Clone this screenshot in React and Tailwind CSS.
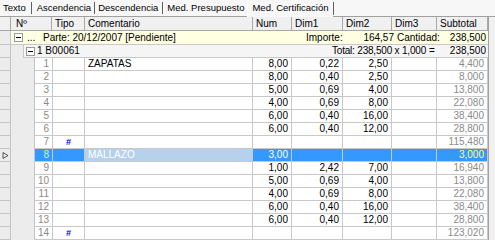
import React from "react";

const rows = [
  { n: 1, tipo: "", com: "ZAPATAS", num: "8,00", d1: "0,22", d2: "2,50", d3: "", sub: "4,400" },
  { n: 2, tipo: "", com: "", num: "8,00", d1: "0,40", d2: "2,50", d3: "", sub: "8,000" },
  { n: 3, tipo: "", com: "", num: "5,00", d1: "0,69", d2: "4,00", d3: "", sub: "13,800" },
  { n: 4, tipo: "", com: "", num: "4,00", d1: "0,69", d2: "8,00", d3: "", sub: "22,080" },
  { n: 5, tipo: "", com: "", num: "6,00", d1: "0,40", d2: "16,00", d3: "", sub: "38,400" },
  { n: 6, tipo: "", com: "", num: "6,00", d1: "0,40", d2: "12,00", d3: "", sub: "28,800" },
  { n: 7, tipo: "#", com: "", num: "", d1: "", d2: "", d3: "", sub: "115,480" },
  { n: 8, tipo: "", com: "MALLAZO", num: "3,00", d1: "", d2: "", d3: "", sub: "3,000", sel: true },
  { n: 9, tipo: "", com: "", num: "1,00", d1: "2,42", d2: "7,00", d3: "", sub: "16,940" },
  { n: 10, tipo: "", com: "", num: "5,00", d1: "0,69", d2: "4,00", d3: "", sub: "13,800" },
  { n: 11, tipo: "", com: "", num: "4,00", d1: "0,69", d2: "8,00", d3: "", sub: "22,080" },
  { n: 12, tipo: "", com: "", num: "6,00", d1: "0,40", d2: "16,00", d3: "", sub: "38,400" },
  { n: 13, tipo: "", com: "", num: "6,00", d1: "0,40", d2: "12,00", d3: "", sub: "28,800" },
  { n: 14, tipo: "#", com: "", num: "", d1: "", d2: "", d3: "", sub: "123,020" },
];

const Collapse = () => (
  <span className="flex h-[9px] w-[9px] items-center justify-center border border-[#9a9a9a] bg-white">
    <span className="h-px w-[5px] bg-black" />
  </span>
);

const Indicator = ({ active }) => (
  <div className="flex w-[11px] shrink-0 items-center justify-center border-b border-r border-[#c4c4c4] bg-[#ececec]">
    {active && (
      <svg width="7" height="7" viewBox="0 0 7 7">
        <path d="M1 0.5 L6 3.5 L1 6.5 Z" fill="none" stroke="#555" strokeWidth="1" />
      </svg>
    )}
  </div>
);

const Row = ({ r }) => {
  const cell = "shrink-0 border-b border-r border-[#c8c8c8] px-[3px] overflow-hidden whitespace-nowrap";
  const bg = r.sel ? "bg-[#3399ff]" : "bg-white";
  return (
    <div className="flex h-[13px] leading-[12px]">
      <Indicator active={r.sel} />
      <div className="w-[24px] shrink-0 bg-[#ececec] border-r border-[#c4c4c4]" />
      <div className={`${cell} ${bg} w-[18px] text-right ${r.sel ? "text-[#ccff66]" : "text-[#8a8a8a]"}`}>{r.n}</div>
      <div className={`${cell} ${bg} w-[32px] text-center font-bold text-[#0000ff] text-[9px]`}>{r.tipo}</div>
      <div className={`${cell} w-[168px] ${r.sel ? "bg-[#b7d1ec] text-white" : "bg-white text-black"}`}>{r.com}</div>
      <div className={`${cell} ${bg} w-[39px] text-right ${r.sel ? "text-white" : ""}`}>{r.num}</div>
      <div className={`${cell} ${bg} w-[51px] text-right`}>{r.d1}</div>
      <div className={`${cell} ${bg} w-[49px] text-right`}>{r.d2}</div>
      <div className={`${cell} ${bg} w-[45px] text-right`}>{r.d3}</div>
      <div className={`${cell} ${bg} w-[51px] text-right ${r.sel ? "text-[#ffff66]" : "text-[#8a8a8a]"}`}>{r.sub}</div>
    </div>
  );
};

export default function App() {
  const head = "shrink-0 border-r border-b border-[#a8a8a8] px-[3px]";
  return (
    <div
      className="h-[240px] w-[495px] overflow-hidden bg-[#f0f0f0] text-[10px] text-black"
      style={{ fontFamily: '"Liberation Sans", Arial, sans-serif' }}
    >
      {/* tabs */}
      <div className="flex h-[17px] items-center border-b border-[#a0a0a0] bg-[#f7f7f7] text-[9.5px] leading-[12px]">
        <span className="pl-[3px]">Texto</span>
        <span className="mx-[5px] h-[12px] w-px bg-[#606060]" />
        <span>Ascendencia</span>
        <span className="mx-[3px] h-[12px] w-px bg-[#606060]" />
        <span>Descendencia</span>
        <span className="mx-[4px] h-[12px] w-px bg-[#606060]" />
        <span>Med. Presupuesto</span>
        <span className="ml-[3px] flex h-[17px] items-center border-l border-[#ffffff] bg-[#f7f7f7] pl-[4px] pr-[5px]">
          Med. Certificación
        </span>
        <span className="h-[13px] w-px bg-[#606060]" />
      </div>

      <div className="w-[489px] border-r border-[#a0a0a0] bg-white">
        {/* header */}
        <div className="flex h-[14px] bg-[#f0f0f0] leading-[13px]">
          <div className="w-[11px] shrink-0 border-r border-b border-[#a8a8a8]" />
          <div className={`${head} w-[41px] pl-[5px]`}>Nº</div>
          <div className={`${head} w-[33px]`}>Tipo</div>
          <div className={`${head} w-[168px]`}>Comentario</div>
          <div className={`${head} w-[39px]`}>Num</div>
          <div className={`${head} w-[51px]`}>Dim1</div>
          <div className={`${head} w-[49px]`}>Dim2</div>
          <div className={`${head} w-[45px]`}>Dim3</div>
          <div className={`${head} w-[51px]`}>Subtotal</div>
        </div>

        {/* Parte row */}
        <div className="flex h-[14px] leading-[13px]">
          <Indicator />
          <div className="flex flex-1 items-center whitespace-nowrap border-b border-[#c8c8c8] bg-[#ffffe1]">
            <span className="ml-[3px]"><Collapse /></span>
            <span className="ml-[4px] w-[16px]">...</span>
            <span className="w-[263px]">Parte: 20/12/2007 [Pendiente]</span>
            <span className="w-[40px]">Importe:</span>
            <span className="w-[48px] text-right">164,57</span>
            <span className="ml-[3px] w-[42px]">Cantidad:</span>
            <span className="flex-1 pr-[2px] text-right">238,500</span>
          </div>
        </div>

        {/* B00061 row */}
        <div className="flex h-[13px] leading-[12px]">
          <Indicator />
          <div className="w-[12px] shrink-0 bg-[#ececec]" />
          <div className="flex flex-1 items-center whitespace-nowrap border-b border-l border-[#c8c8c8] bg-[#f5f5f5]">
            <span className="ml-[2px]"><Collapse /></span>
            <span className="ml-[2px] w-[295px]">1 B00061</span>
            <span className="w-[97px] tracking-[-0.2px]">Total: 238,500 x 1,000</span>
            <span className="w-[10px]">=</span>
            <span className="flex-1 pr-[2px] text-right">238,500</span>
          </div>
        </div>

        {rows.map((r) => (
          <Row key={r.n} r={r} />
        ))}
      </div>
    </div>
  );
}
